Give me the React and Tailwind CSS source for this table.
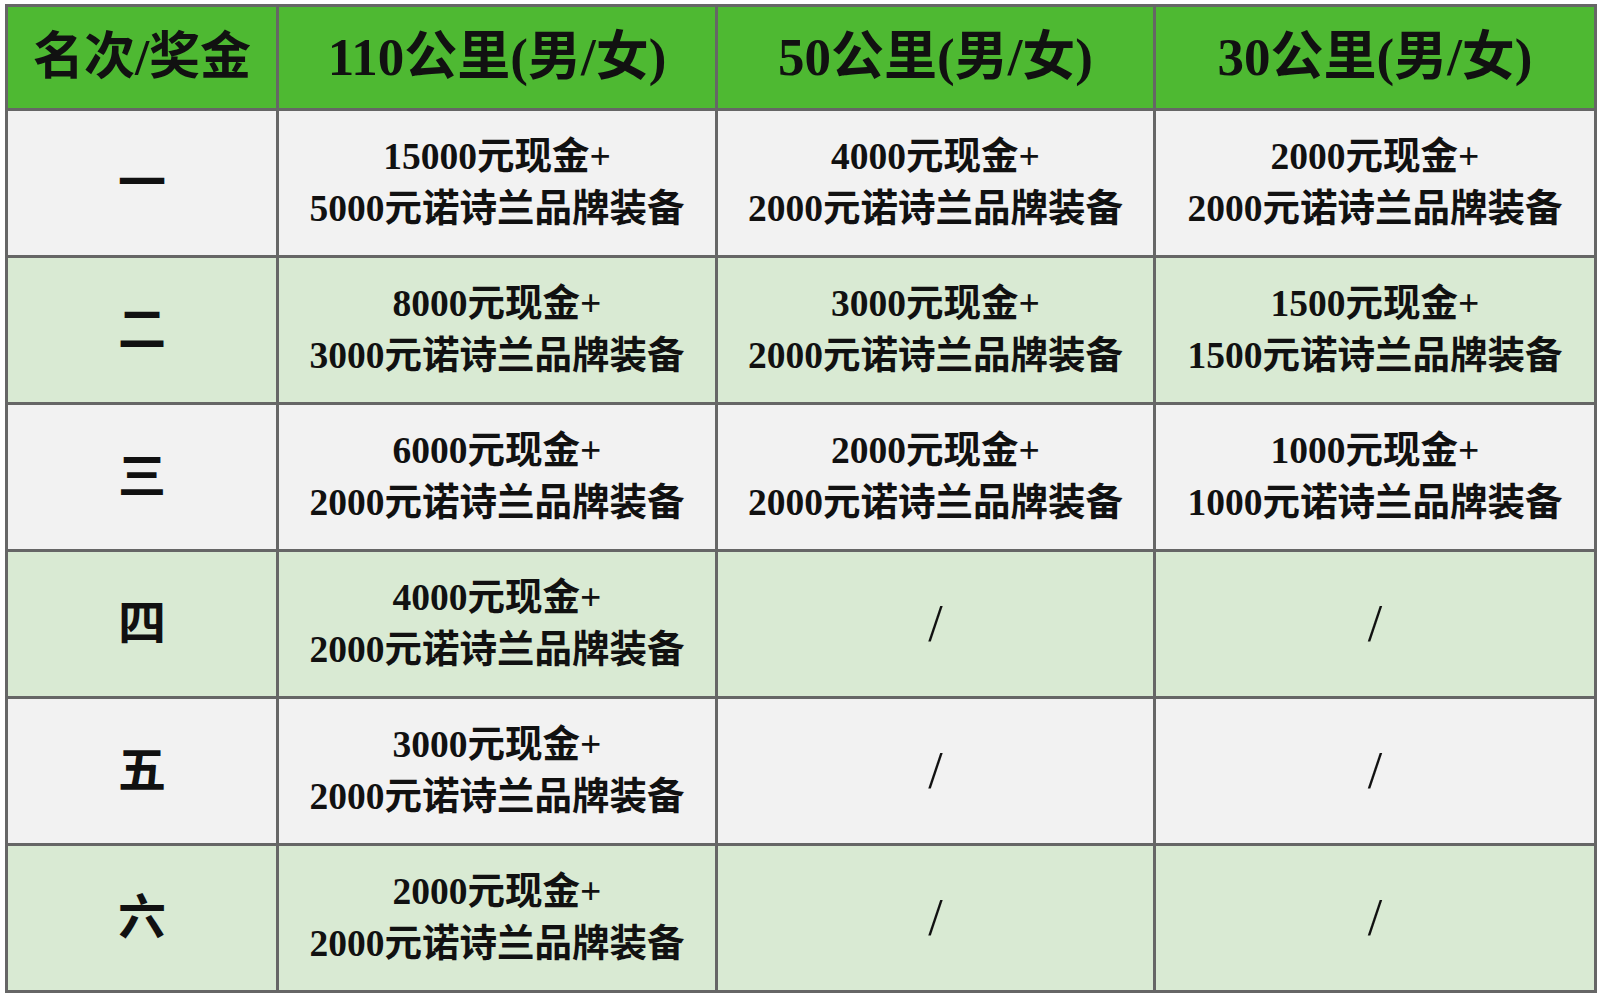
import React from "react";

const columns = ["110公里(男/女)", "50公里(男/女)", "30公里(男/女)"];

const rows = [
  {
    rank: "一",
    prizes: [
      ["15000元现金+", "5000元诺诗兰品牌装备"],
      ["4000元现金+", "2000元诺诗兰品牌装备"],
      ["2000元现金+", "2000元诺诗兰品牌装备"],
    ],
  },
  {
    rank: "二",
    prizes: [
      ["8000元现金+", "3000元诺诗兰品牌装备"],
      ["3000元现金+", "2000元诺诗兰品牌装备"],
      ["1500元现金+", "1500元诺诗兰品牌装备"],
    ],
  },
  {
    rank: "三",
    prizes: [
      ["6000元现金+", "2000元诺诗兰品牌装备"],
      ["2000元现金+", "2000元诺诗兰品牌装备"],
      ["1000元现金+", "1000元诺诗兰品牌装备"],
    ],
  },
  {
    rank: "四",
    prizes: [["4000元现金+", "2000元诺诗兰品牌装备"], null, null],
  },
  {
    rank: "五",
    prizes: [["3000元现金+", "2000元诺诗兰品牌装备"], null, null],
  },
  {
    rank: "六",
    prizes: [["2000元现金+", "2000元诺诗兰品牌装备"], null, null],
  },
];

const font = {
  fontFamily: "'Liberation Serif', 'Noto Sans CJK SC', serif",
};

const App = () => {
  return (
    <div className="w-[1600px] h-[999px] bg-white pt-[4px] pl-[5px]" style={font}>
      <table className="table-fixed border-collapse w-[1589px] text-[#111]">
        <colgroup>
          <col className="w-[271px]" />
          <col className="w-[439px]" />
          <col className="w-[438px]" />
          <col className="w-[441px]" />
        </colgroup>
        <thead>
          <tr className="h-[104px] bg-[#4eb932]">
            <th className="border-[3px] border-[#666] text-[51px] font-bold text-center align-middle">
              名次/奖金
            </th>
            {columns.map((c) => (
              <th
                key={c}
                className="border-[3px] border-[#666] text-[53px] font-bold text-center align-middle"
              >
                {c}
              </th>
            ))}
          </tr>
        </thead>
        <tbody>
          {rows.map((row, i) => (
            <tr
              key={row.rank}
              className={`h-[147px] ${i % 2 === 0 ? "bg-[#f2f2f2]" : "bg-[#d9ead3]"}`}
            >
              <td className="border-[3px] border-[#666] text-[48px] font-bold text-center align-middle">
                {row.rank}
              </td>
              {row.prizes.map((p, j) => (
                <td
                  key={j}
                  className="border-[3px] border-[#666] text-center align-middle"
                >
                  {p ? (
                    <div className="text-[37.5px] leading-[52px] font-bold">
                      <div>{p[0]}</div>
                      <div>{p[1]}</div>
                    </div>
                  ) : (
                    <div className="text-[52px] leading-[52px] font-normal">/</div>
                  )}
                </td>
              ))}
            </tr>
          ))}
        </tbody>
      </table>
    </div>
  );
};

export default App;
